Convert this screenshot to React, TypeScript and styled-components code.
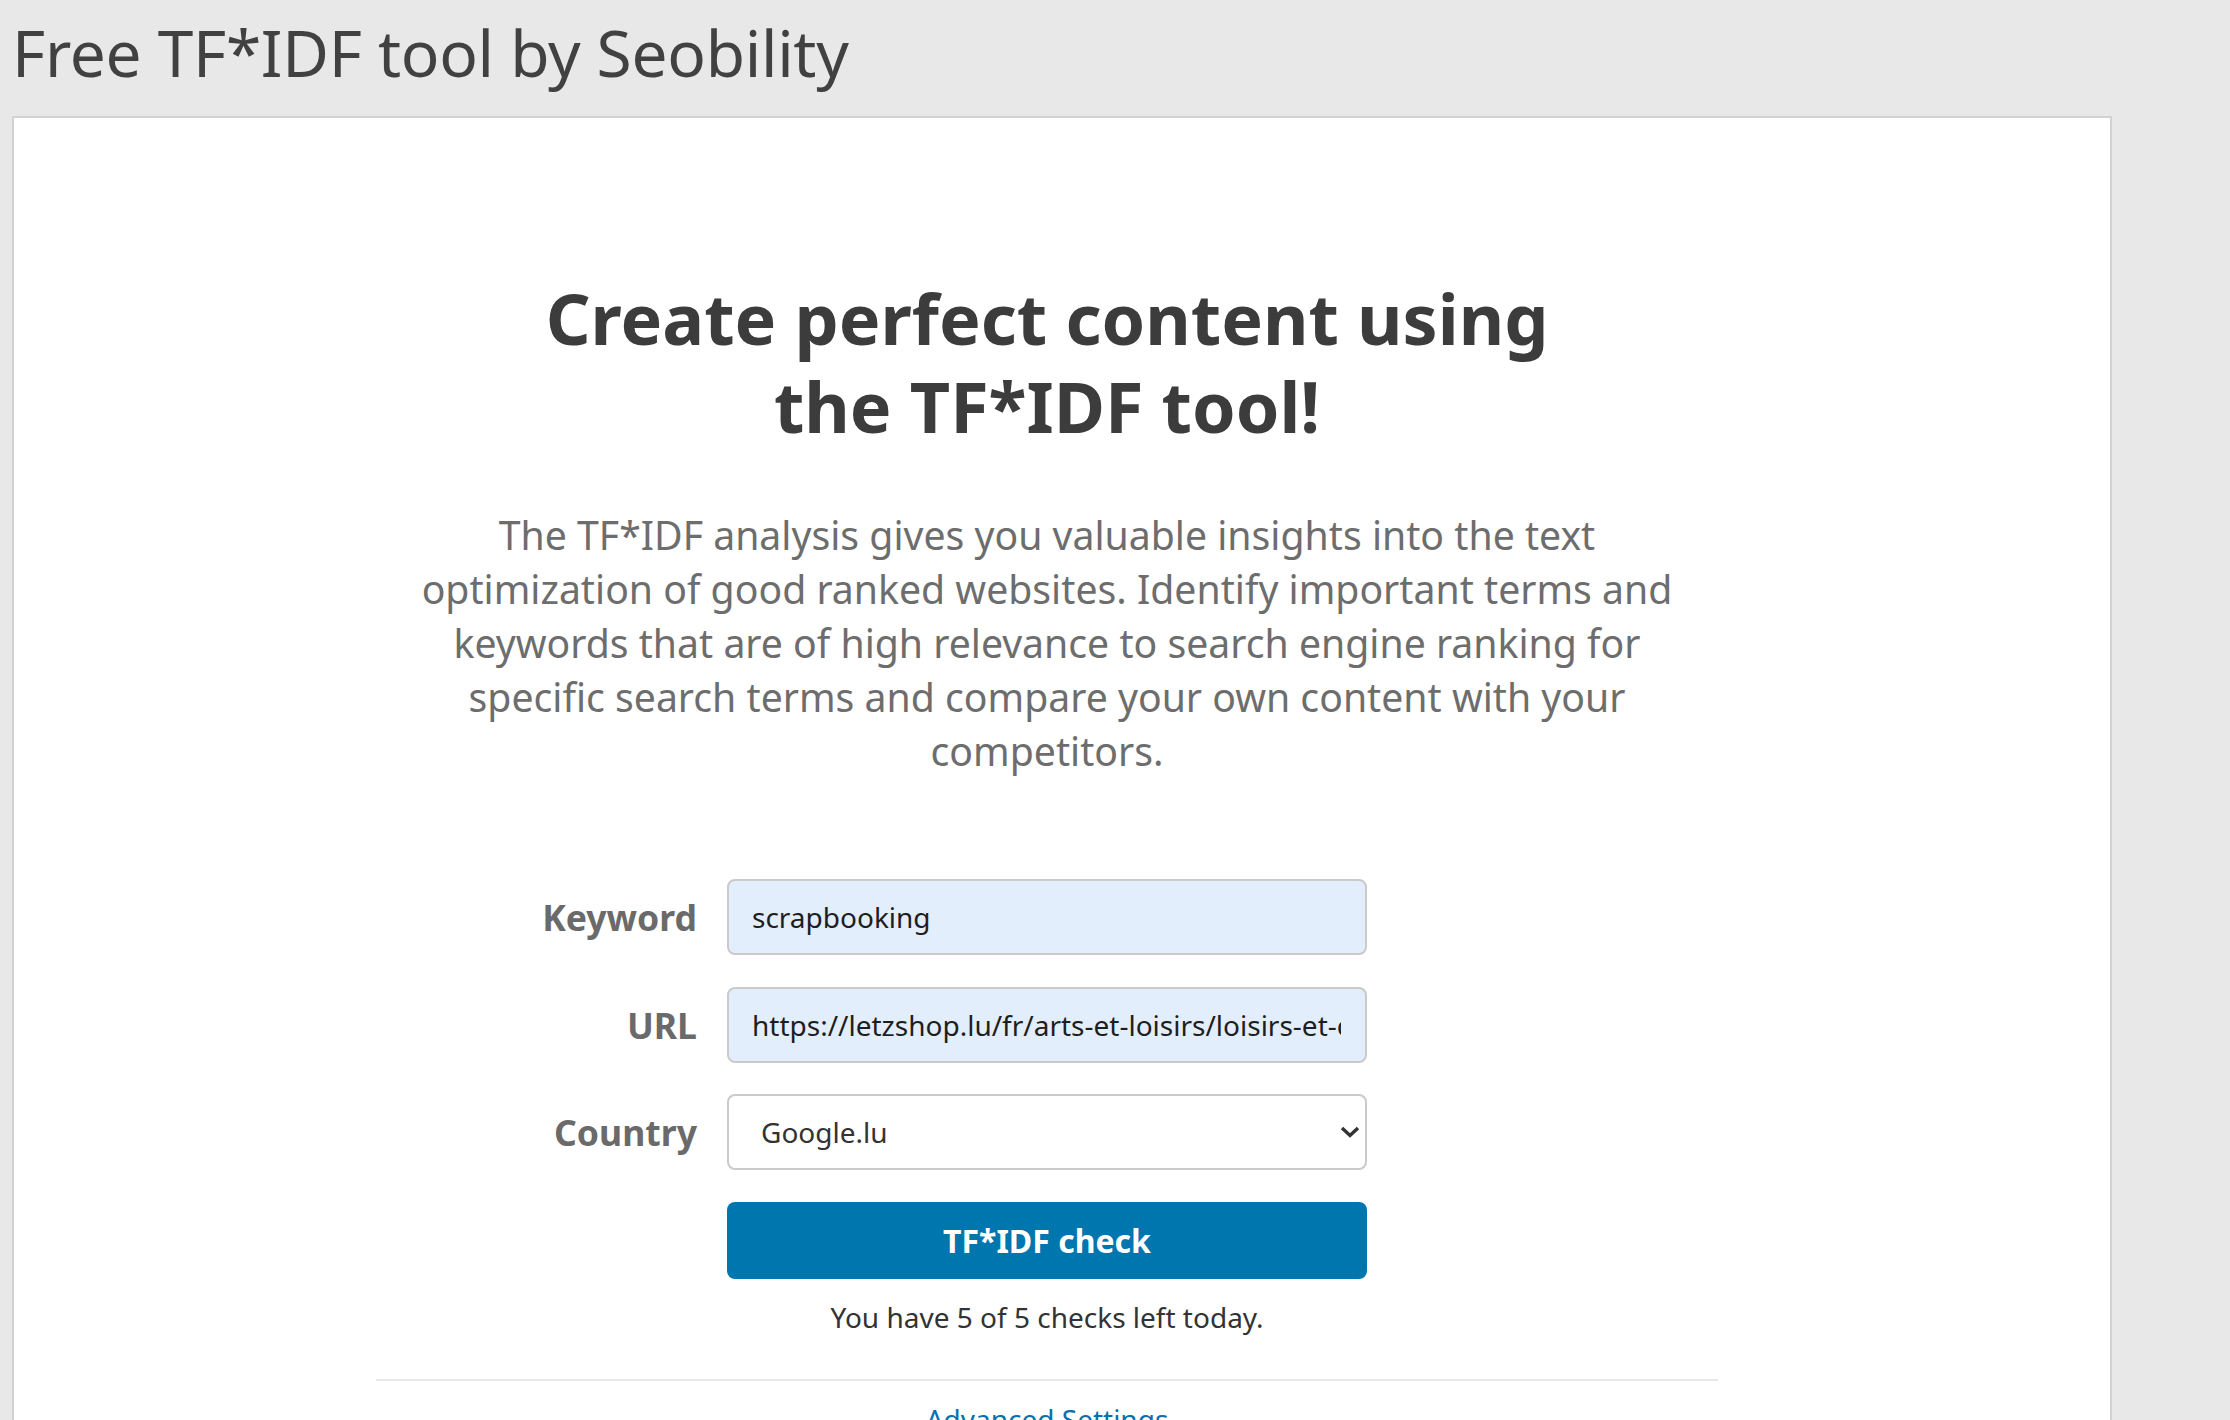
import React from "react";
import styled, { createGlobalStyle } from "styled-components";

const GlobalStyle = createGlobalStyle`
  html, body {
    margin: 0;
    padding: 0;
    background: #e8e8e8;
    overflow: hidden;
  }
  body {
    font-family: "Noto Sans", "Open Sans", "Liberation Sans", sans-serif;
  }
  * { box-sizing: border-box; }
`;

const Page = styled.div`
  min-height: 1420px;
  background: #e8e8e8;
`;

const Header = styled.header`
  padding: 15px 0 0 12px;
  height: 116px;
`;

const PageTitle = styled.h1`
  margin: 0;
  font-size: 64px;
  line-height: 76px;
  font-weight: 400;
  color: #414141;
  letter-spacing: -0.3px;
`;

const Card = styled.main`
  margin-left: 12px;
  width: 2100px;
  min-height: 1500px;
  background: #ffffff;
  border: 2px solid #d2d2d2;
  padding: 156px 30px 0 0;
`;

const Content = styled.div`
  display: flex;
  flex-direction: column;
  align-items: center;
`;

const Heading = styled.h2`
  margin: 0;
  max-width: 1100px;
  font-size: 70px;
  line-height: 88px;
  font-weight: 700;
  color: #3c3c3c;
  text-align: center;
`;

const Intro = styled.p`
  margin: 58px 0 0;
  max-width: 1295px;
  font-size: 39.2px;
  line-height: 54px;
  color: #6d6d6d;
  text-align: center;
`;

const Form = styled.form`
  margin-top: 101px;
  width: 100%;
  display: grid;
  grid-template-columns: 1fr 640px 1fr;
  column-gap: 30px;
  row-gap: 31.5px;
  grid-auto-rows: 76px;
`;

const Label = styled.label`
  grid-column: 1;
  display: flex;
  align-items: center;
  justify-content: flex-end;
  font-size: 35.6px;
  font-weight: 700;
  color: #6a6a6a;
`;

const TextInput = styled.input`
  grid-column: 2;
  width: 100%;
  height: 76px;
  margin: 0;
  padding: 0 24px 0 23px;
  border: 2px solid #cacaca;
  border-radius: 8px;
  background: #e3eefd;
  font-family: "Noto Sans", "Open Sans", sans-serif;
  font-size: 28px;
  color: #1e1e1e;
  outline: none;
`;

const SelectWrap = styled.div`
  grid-column: 2;
  position: relative;
  height: 76px;
`;

const Select = styled.select`
  appearance: none;
  -webkit-appearance: none;
  width: 100%;
  height: 76px;
  margin: 0;
  padding: 0 40px 0 32px;
  border: 2px solid #cacaca;
  border-radius: 8px;
  background: #ffffff;
  font-family: "Noto Sans", "Open Sans", sans-serif;
  font-size: 28px;
  color: #333333;
  outline: none;
`;

const Chevron = styled.svg`
  position: absolute;
  right: 7px;
  top: 50%;
  width: 20px;
  height: 12px;
  margin-top: -6px;
  pointer-events: none;
`;

const Submit = styled.button`
  grid-column: 2;
  height: 77px;
  margin: 0;
  border: none;
  border-radius: 8px;
  background: #0076ae;
  color: #ffffff;
  font-family: "Noto Sans", "Open Sans", sans-serif;
  font-size: 32px;
  font-weight: 700;
  cursor: pointer;
`;

const Quota = styled.div`
  margin-top: 19px;
  font-size: 28px;
  line-height: 40px;
  color: #333333;
  text-align: center;
`;

const Divider = styled.hr`
  margin: 42px 0 0;
  width: 1342px;
  height: 2px;
  border: none;
  background: #e8e8e8;
`;

const AdvancedLink = styled.a`
  margin-top: 18px;
  font-size: 28px;
  line-height: 40px;
  color: #0a6fae;
  text-decoration: none;
`;

export default function App() {
  return (
    <>
      <GlobalStyle />
      <Page>
        <Header>
          <PageTitle>Free TF*IDF tool by Seobility</PageTitle>
        </Header>
        <Card>
          <Content>
            <Heading>Create perfect content using the TF*IDF tool!</Heading>
            <Intro>
              The TF*IDF analysis gives you valuable insights into the text optimization of good
              ranked websites. Identify important terms and keywords that are of high relevance to
              search engine ranking for specific search terms and compare your own content with
              your competitors.
            </Intro>
            <Form onSubmit={(e) => e.preventDefault()}>
              <Label htmlFor="kw">Keyword</Label>
              <TextInput id="kw" type="text" defaultValue="scrapbooking" />
              <Label htmlFor="url">URL</Label>
              <TextInput
                id="url"
                type="text"
                defaultValue="https://letzshop.lu/fr/arts-et-loisirs/loisirs-et-creation/scrapbooking"
              />
              <Label htmlFor="country">Country</Label>
              <SelectWrap>
                <Select id="country" defaultValue="lu">
                  <option value="lu">Google.lu</option>
                  <option value="de">Google.de</option>
                  <option value="fr">Google.fr</option>
                </Select>
                <Chevron viewBox="0 0 20 12" aria-hidden="true">
                  <path d="M2 2 L10 9.5 L18 2" fill="none" stroke="#333" strokeWidth="3.4" />
                </Chevron>
              </SelectWrap>
              <Submit type="submit">TF*IDF check</Submit>
            </Form>
            <Quota>You have 5 of 5 checks left today.</Quota>
            <Divider />
            <AdvancedLink href="#">Advanced Settings</AdvancedLink>
          </Content>
        </Card>
      </Page>
    </>
  );
}
